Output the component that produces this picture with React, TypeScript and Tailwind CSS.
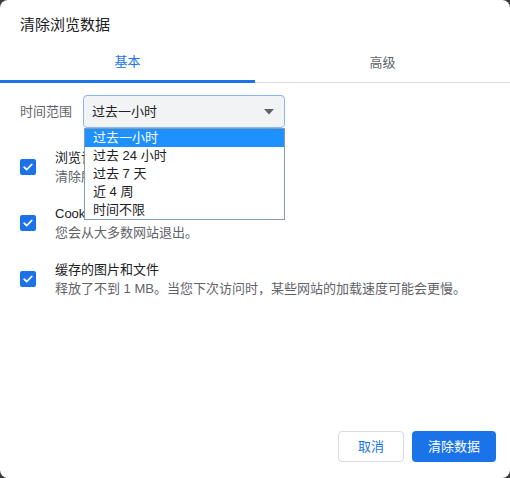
import React from 'react';

const font = { fontFamily: '"Liberation Sans", "Noto Sans CJK SC", sans-serif' };

const options = ['过去一小时', '过去 24 小时', '过去 7 天', '近 4 周', '时间不限'];

const rows = [
  { title: '浏览记录', desc: '清除所有已登录设备中的记录' },
  { title: 'Cookie 及其他网站数据', desc: '您会从大多数网站退出。' },
  { title: '缓存的图片和文件', desc: '释放了不到 1 MB。当您下次访问时，某些网站的加载速度可能会更慢。' },
];

function Checkbox() {
  return (
    <div className="w-4 h-4 rounded-[2px] bg-[#1a73e8] flex items-center justify-center shrink-0">
      <svg width="12" height="12" viewBox="0 0 12 12" fill="none">
        <path d="M2.2 6.2l2.5 2.5 5-5.2" stroke="white" strokeWidth="1.8" strokeLinecap="round" strokeLinejoin="round" />
      </svg>
    </div>
  );
}

export default function App() {
  return (
    <div className="w-[510px] h-[478px] bg-[#3c3c3c]" style={font}>
      <div className="w-full h-full bg-white rounded-lg flex flex-col overflow-hidden">
        {/* 标题 */}
        <div className="h-[44px] pt-[17px] pl-5 text-[15px] leading-[16px] text-[#202124]">清除浏览数据</div>

        {/* 标签页 */}
        <div className="flex h-[39px]">
          <div className="flex-1 flex items-center justify-center text-[13px] text-[#1a73e8] border-b-[3px] border-[#1a73e8]">
            基本
          </div>
          <div className="flex-1 flex items-center justify-center text-[13px] text-[#5f6368] border-b border-[#dadce0]">
            高级
          </div>
        </div>

        <div className="px-5">
          {/* 时间范围 */}
          <div className="relative flex items-center mt-[12px] h-[33px]">
            <span className="w-[63px] text-[13px] text-[#5f6368]">时间范围</span>
            <div className="w-[202px] h-[33px] bg-[#f1f3f4] border border-[#8ab4f8] rounded-[4px] flex items-center justify-between pl-[8px] pr-[10px] text-[13px] text-[#202124]">
              <span>过去一小时</span>
              <svg width="10" height="6" viewBox="0 0 10 6">
                <path d="M0 0h10L5 5.5z" fill="#5f6368" />
              </svg>
            </div>
            <div className="absolute left-[64px] top-[33px] w-[201px] bg-white border border-[#7f9db9] z-10 text-[13px] text-[#202124]">
              {options.map((o, i) => (
                <div
                  key={o}
                  className={`h-[18px] leading-[18px] pl-[8px] ${i === 0 ? 'bg-[#1e90ff] text-white' : ''}`}
                >
                  {o}
                </div>
              ))}
            </div>
          </div>

          {/* 复选项 */}
          <div className="mt-[11px]">
            {rows.map((r) => (
              <div key={r.title} className="h-[56px] flex items-center">
                <Checkbox />
                <div className="ml-[19px] text-[13px] leading-[19px]">
                  <div className="text-[#202124]">{r.title}</div>
                  <div className="text-[#5f6368]">{r.desc}</div>
                </div>
              </div>
            ))}
          </div>
        </div>

        {/* 按钮 */}
        <div className="mt-auto flex justify-end gap-2 pr-[14px] pb-[16px]">
          <button className="w-[66px] h-[31px] rounded-[4px] border border-[#dadce0] bg-white text-[13px] text-[#1a73e8]">
            取消
          </button>
          <button className="w-[84px] h-[31px] rounded-[4px] bg-[#1a73e8] text-[13px] text-white">
            清除数据
          </button>
        </div>
      </div>
    </div>
  );
}
